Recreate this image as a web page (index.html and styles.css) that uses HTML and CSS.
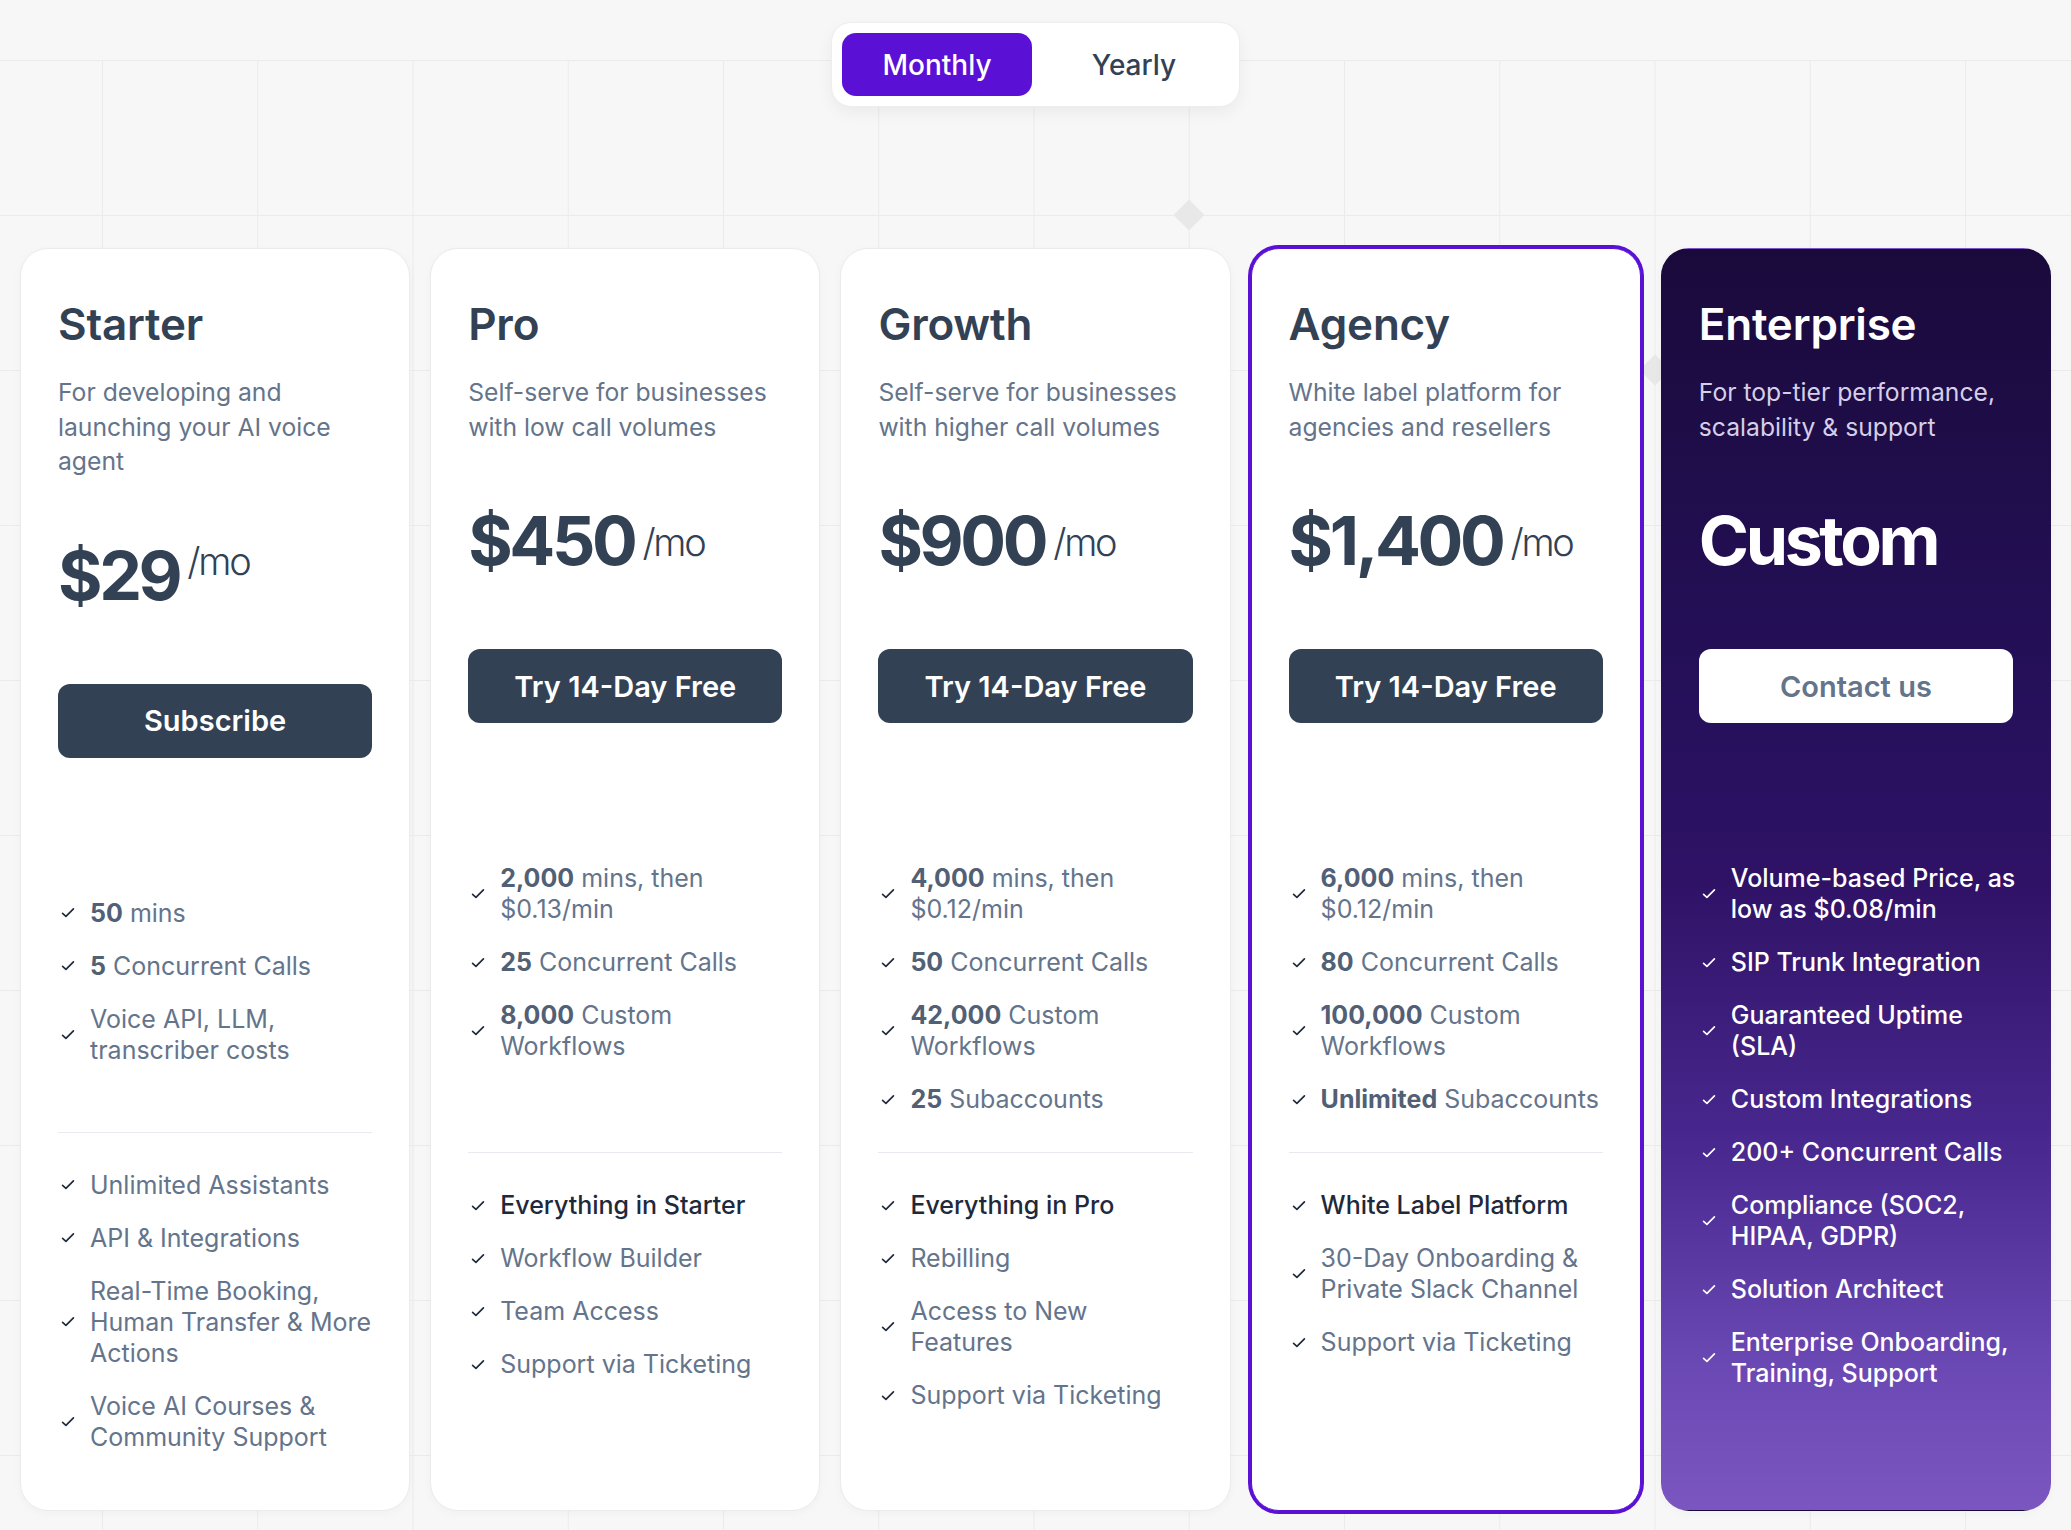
FILE: index.html
```html
<!DOCTYPE html>
<html lang="en">
<head>
<meta charset="utf-8">
<title>Pricing</title>
<link rel="stylesheet" href="styles.css">
</head>
<body>
<div class="page">
  <span class="diamond diamond--a"></span>
  <span class="diamond diamond--b"></span>

  <div class="toggle-wrap">
    <div class="toggle">
      <button class="tg tg--active">Monthly</button>
      <button class="tg">Yearly</button>
    </div>
  </div>

  <div class="plans">
    <!-- Starter -->
    <div class="card card--starter">
      <h2 class="title">Starter</h2>
      <p class="desc">For developing and<br>launching your AI voice<br>agent</p>
      <div class="price"><span class="amount">$29</span><span class="per">/mo</span></div>
      <a class="btn">Subscribe</a>
      <div class="features">
        <ul class="list list--main">
          <li class="item"><svg class="check" viewBox="0 0 24 24"><path d="M5.5 12.5 9.5 16 18.5 7"/></svg><span><b>50</b> mins</span></li>
          <li class="item"><svg class="check" viewBox="0 0 24 24"><path d="M5.5 12.5 9.5 16 18.5 7"/></svg><span><b>5</b> Concurrent Calls</span></li>
          <li class="item"><svg class="check" viewBox="0 0 24 24"><path d="M5.5 12.5 9.5 16 18.5 7"/></svg><span>Voice API, LLM,<br>transcriber costs</span></li>
        </ul>
        <ul class="list list--extra">
          <li class="item"><svg class="check" viewBox="0 0 24 24"><path d="M5.5 12.5 9.5 16 18.5 7"/></svg><span>Unlimited Assistants</span></li>
          <li class="item"><svg class="check" viewBox="0 0 24 24"><path d="M5.5 12.5 9.5 16 18.5 7"/></svg><span>API &amp; Integrations</span></li>
          <li class="item"><svg class="check" viewBox="0 0 24 24"><path d="M5.5 12.5 9.5 16 18.5 7"/></svg><span>Real-Time Booking,<br>Human Transfer &amp; More<br>Actions</span></li>
          <li class="item"><svg class="check" viewBox="0 0 24 24"><path d="M5.5 12.5 9.5 16 18.5 7"/></svg><span>Voice AI Courses &amp;<br>Community Support</span></li>
        </ul>
      </div>
    </div>

    <!-- Pro -->
    <div class="card">
      <h2 class="title">Pro</h2>
      <p class="desc">Self-serve for businesses<br>with low call volumes</p>
      <div class="price"><span class="amount">$450</span><span class="per">/mo</span></div>
      <a class="btn">Try 14-Day Free</a>
      <div class="features">
        <ul class="list list--main">
          <li class="item"><svg class="check" viewBox="0 0 24 24"><path d="M5.5 12.5 9.5 16 18.5 7"/></svg><span><b>2,000</b> mins, then<br>$0.13/min</span></li>
          <li class="item"><svg class="check" viewBox="0 0 24 24"><path d="M5.5 12.5 9.5 16 18.5 7"/></svg><span><b>25</b> Concurrent Calls</span></li>
          <li class="item"><svg class="check" viewBox="0 0 24 24"><path d="M5.5 12.5 9.5 16 18.5 7"/></svg><span><b>8,000</b> Custom<br>Workflows</span></li>
        </ul>
        <ul class="list list--extra">
          <li class="item item--strong"><svg class="check" viewBox="0 0 24 24"><path d="M5.5 12.5 9.5 16 18.5 7"/></svg><span>Everything in Starter</span></li>
          <li class="item"><svg class="check" viewBox="0 0 24 24"><path d="M5.5 12.5 9.5 16 18.5 7"/></svg><span>Workflow Builder</span></li>
          <li class="item"><svg class="check" viewBox="0 0 24 24"><path d="M5.5 12.5 9.5 16 18.5 7"/></svg><span>Team Access</span></li>
          <li class="item"><svg class="check" viewBox="0 0 24 24"><path d="M5.5 12.5 9.5 16 18.5 7"/></svg><span>Support via Ticketing</span></li>
        </ul>
      </div>
    </div>

    <!-- Growth -->
    <div class="card">
      <h2 class="title">Growth</h2>
      <p class="desc">Self-serve for businesses<br>with higher call volumes</p>
      <div class="price"><span class="amount">$900</span><span class="per">/mo</span></div>
      <a class="btn">Try 14-Day Free</a>
      <div class="features">
        <ul class="list list--main">
          <li class="item"><svg class="check" viewBox="0 0 24 24"><path d="M5.5 12.5 9.5 16 18.5 7"/></svg><span><b>4,000</b> mins, then<br>$0.12/min</span></li>
          <li class="item"><svg class="check" viewBox="0 0 24 24"><path d="M5.5 12.5 9.5 16 18.5 7"/></svg><span><b>50</b> Concurrent Calls</span></li>
          <li class="item"><svg class="check" viewBox="0 0 24 24"><path d="M5.5 12.5 9.5 16 18.5 7"/></svg><span><b>42,000</b> Custom<br>Workflows</span></li>
          <li class="item"><svg class="check" viewBox="0 0 24 24"><path d="M5.5 12.5 9.5 16 18.5 7"/></svg><span><b>25</b> Subaccounts</span></li>
        </ul>
        <ul class="list list--extra">
          <li class="item item--strong"><svg class="check" viewBox="0 0 24 24"><path d="M5.5 12.5 9.5 16 18.5 7"/></svg><span>Everything in Pro</span></li>
          <li class="item"><svg class="check" viewBox="0 0 24 24"><path d="M5.5 12.5 9.5 16 18.5 7"/></svg><span>Rebilling</span></li>
          <li class="item"><svg class="check" viewBox="0 0 24 24"><path d="M5.5 12.5 9.5 16 18.5 7"/></svg><span>Access to New<br>Features</span></li>
          <li class="item"><svg class="check" viewBox="0 0 24 24"><path d="M5.5 12.5 9.5 16 18.5 7"/></svg><span>Support via Ticketing</span></li>
        </ul>
      </div>
    </div>

    <!-- Agency -->
    <div class="card card--agency">
      <h2 class="title">Agency</h2>
      <p class="desc">White label platform for<br>agencies and resellers</p>
      <div class="price"><span class="amount">$1,400</span><span class="per">/mo</span></div>
      <a class="btn">Try 14-Day Free</a>
      <div class="features">
        <ul class="list list--main">
          <li class="item"><svg class="check" viewBox="0 0 24 24"><path d="M5.5 12.5 9.5 16 18.5 7"/></svg><span><b>6,000</b> mins, then<br>$0.12/min</span></li>
          <li class="item"><svg class="check" viewBox="0 0 24 24"><path d="M5.5 12.5 9.5 16 18.5 7"/></svg><span><b>80</b> Concurrent Calls</span></li>
          <li class="item"><svg class="check" viewBox="0 0 24 24"><path d="M5.5 12.5 9.5 16 18.5 7"/></svg><span><b>100,000</b> Custom<br>Workflows</span></li>
          <li class="item"><svg class="check" viewBox="0 0 24 24"><path d="M5.5 12.5 9.5 16 18.5 7"/></svg><span><b>Unlimited</b> Subaccounts</span></li>
        </ul>
        <ul class="list list--extra">
          <li class="item item--strong"><svg class="check" viewBox="0 0 24 24"><path d="M5.5 12.5 9.5 16 18.5 7"/></svg><span>White Label Platform</span></li>
          <li class="item"><svg class="check" viewBox="0 0 24 24"><path d="M5.5 12.5 9.5 16 18.5 7"/></svg><span>30-Day Onboarding &amp;<br>Private Slack Channel</span></li>
          <li class="item"><svg class="check" viewBox="0 0 24 24"><path d="M5.5 12.5 9.5 16 18.5 7"/></svg><span>Support via Ticketing</span></li>
        </ul>
      </div>
    </div>

    <!-- Enterprise -->
    <div class="card card--enterprise">
      <h2 class="title">Enterprise</h2>
      <p class="desc">For top-tier performance,<br>scalability &amp; support</p>
      <div class="price"><span class="amount">Custom</span></div>
      <a class="btn btn--light">Contact us</a>
      <div class="features">
        <ul class="list">
          <li class="item"><svg class="check" viewBox="0 0 24 24"><path d="M5.5 12.5 9.5 16 18.5 7"/></svg><span>Volume-based Price, as<br>low as $0.08/min</span></li>
          <li class="item"><svg class="check" viewBox="0 0 24 24"><path d="M5.5 12.5 9.5 16 18.5 7"/></svg><span>SIP Trunk Integration</span></li>
          <li class="item"><svg class="check" viewBox="0 0 24 24"><path d="M5.5 12.5 9.5 16 18.5 7"/></svg><span>Guaranteed Uptime<br>(SLA)</span></li>
          <li class="item"><svg class="check" viewBox="0 0 24 24"><path d="M5.5 12.5 9.5 16 18.5 7"/></svg><span>Custom Integrations</span></li>
          <li class="item"><svg class="check" viewBox="0 0 24 24"><path d="M5.5 12.5 9.5 16 18.5 7"/></svg><span>200+ Concurrent Calls</span></li>
          <li class="item"><svg class="check" viewBox="0 0 24 24"><path d="M5.5 12.5 9.5 16 18.5 7"/></svg><span>Compliance (SOC2,<br>HIPAA, GDPR)</span></li>
          <li class="item"><svg class="check" viewBox="0 0 24 24"><path d="M5.5 12.5 9.5 16 18.5 7"/></svg><span>Solution Architect</span></li>
          <li class="item"><svg class="check" viewBox="0 0 24 24"><path d="M5.5 12.5 9.5 16 18.5 7"/></svg><span>Enterprise Onboarding,<br>Training, Support</span></li>
        </ul>
      </div>
    </div>
  </div>
</div>
</body>
</html>
```

FILE: styles.css
```css
* { box-sizing: border-box; }

html, body {
  margin: 0;
  padding: 0;
}

body {
  font-family: Inter, "Noto Sans", "Liberation Sans", sans-serif;
  background: #f7f7f8;
  color: #334155;
}

.page {
  position: relative;
  min-height: 1530px;
  padding: 22px 20px 0;
  overflow: hidden;
}

.page::before {
  content: "";
  position: absolute;
  left: 0;
  right: 0;
  top: 60px;
  bottom: 0;
  background-image:
    linear-gradient(to right, #ebebeb 1px, transparent 1px),
    linear-gradient(to bottom, #ebebeb 1px, transparent 1px);
  background-size: 155.25px 155px;
  background-position: 102px 0;
  z-index: 0;
}

.diamond {
  position: absolute;
  width: 22px;
  height: 22px;
  background: #e8e8e9;
  transform: rotate(45deg);
  z-index: 0;
}
.diamond--a { left: 1178px; top: 204px; }
.diamond--b { left: 1644px; top: 359px; }

/* Toggle */
.toggle-wrap {
  position: relative;
  z-index: 1;
  display: flex;
  justify-content: center;
}

.toggle {
  display: flex;
  gap: 7px;
  padding: 10px;
  background: #fff;
  border: 1px solid #ededed;
  border-radius: 20px;
  box-shadow: 0 6px 16px rgba(0, 0, 0, 0.05);
}

.tg {
  width: 190px;
  height: 63px;
  border: 0;
  border-radius: 14px;
  background: transparent;
  font-family: inherit;
  font-size: 28px;
  font-weight: 500;
  color: #334155;
  cursor: pointer;
}

.tg--active {
  background: #5b10d6;
  color: #fff;
}

/* Plans */
.plans {
  position: relative;
  z-index: 1;
  display: grid;
  grid-template-columns: repeat(5, minmax(0, 1fr));
  gap: 20px;
  margin-top: 141px;
}

.card {
  min-width: 0;
  background: #fff;
  border: 1px solid #ebebeb;
  border-radius: 28px;
  padding: 49px 37px 57px;
  box-shadow: 0 2px 10px rgba(0, 0, 0, 0.03);
}

.card--agency {
  border-color: #5b10d6;
  box-shadow: 0 0 0 3px #5b10d6;
}

.card--enterprise {
  border-color: transparent;
  background: linear-gradient(180deg, #1a0a3b 0%, #25105a 35%, #2f1266 50%, #4a2991 72%, #6a48b3 88%, #7b56c0 100%);
}

.title {
  margin: 0;
  font-size: 44px;
  line-height: 53px;
  font-weight: 600;
  color: #334155;
  letter-spacing: -0.2px;
}

.desc {
  margin: 24px 0 0;
  font-size: 24.7px;
  line-height: 34.5px;
  color: #64748b;
  white-space: nowrap;
}

.price {
  margin-top: 62px;
  font-size: 68px;
  line-height: 68px;
  font-weight: 700;
  letter-spacing: -0.05em;
  color: #334155;
  white-space: nowrap;
}

.per {
  display: inline-block;
  margin-left: 8px;
  font-size: 38px;
  line-height: 1;
  font-weight: 300;
  letter-spacing: -0.06em;
  vertical-align: 9px;
}

.card--starter .per {
  vertical-align: 25px;
}

.btn {
  display: flex;
  align-items: center;
  justify-content: center;
  margin-top: 75px;
  height: 74px;
  border-radius: 12px;
  background: #334155;
  color: #fff;
  font-size: 29px;
  font-weight: 600;
  cursor: pointer;
}

.btn--light {
  background: #fff;
  color: #64748b;
}

.card--enterprise .title,
.card--enterprise .price { color: #fff; }
.card--enterprise .desc { color: #d6cfe8; }

/* Features */
.features {
  margin-top: 140px;
}

.list {
  list-style: none;
  margin: 0;
  padding: 0;
  display: flex;
  flex-direction: column;
  gap: 22px;
}

.list--main {
  min-height: 289px;
  padding-bottom: 36px;
  justify-content: flex-start;
}

.card--starter .list--main {
  min-height: 234px;
}

.list--extra {
  border-top: 1px solid #e7e9ee;
  padding-top: 37px;
}

.item {
  display: flex;
  align-items: center;
  gap: 12px;
  font-size: 25px;
  line-height: 31px;
  color: #64748b;
  white-space: nowrap;
}

.item b {
  font-weight: 700;
  color: #526075;
}

.item--strong {
  color: #1e293b;
  font-weight: 500;
}

.check {
  flex: none;
  width: 20px;
  height: 20px;
  fill: none;
  stroke: #1e293b;
  stroke-width: 2;
  stroke-linecap: round;
  stroke-linejoin: round;
}

.card--enterprise .item {
  color: #fff;
  font-weight: 500;
}

.card--enterprise .check {
  stroke: #fff;
}
```
